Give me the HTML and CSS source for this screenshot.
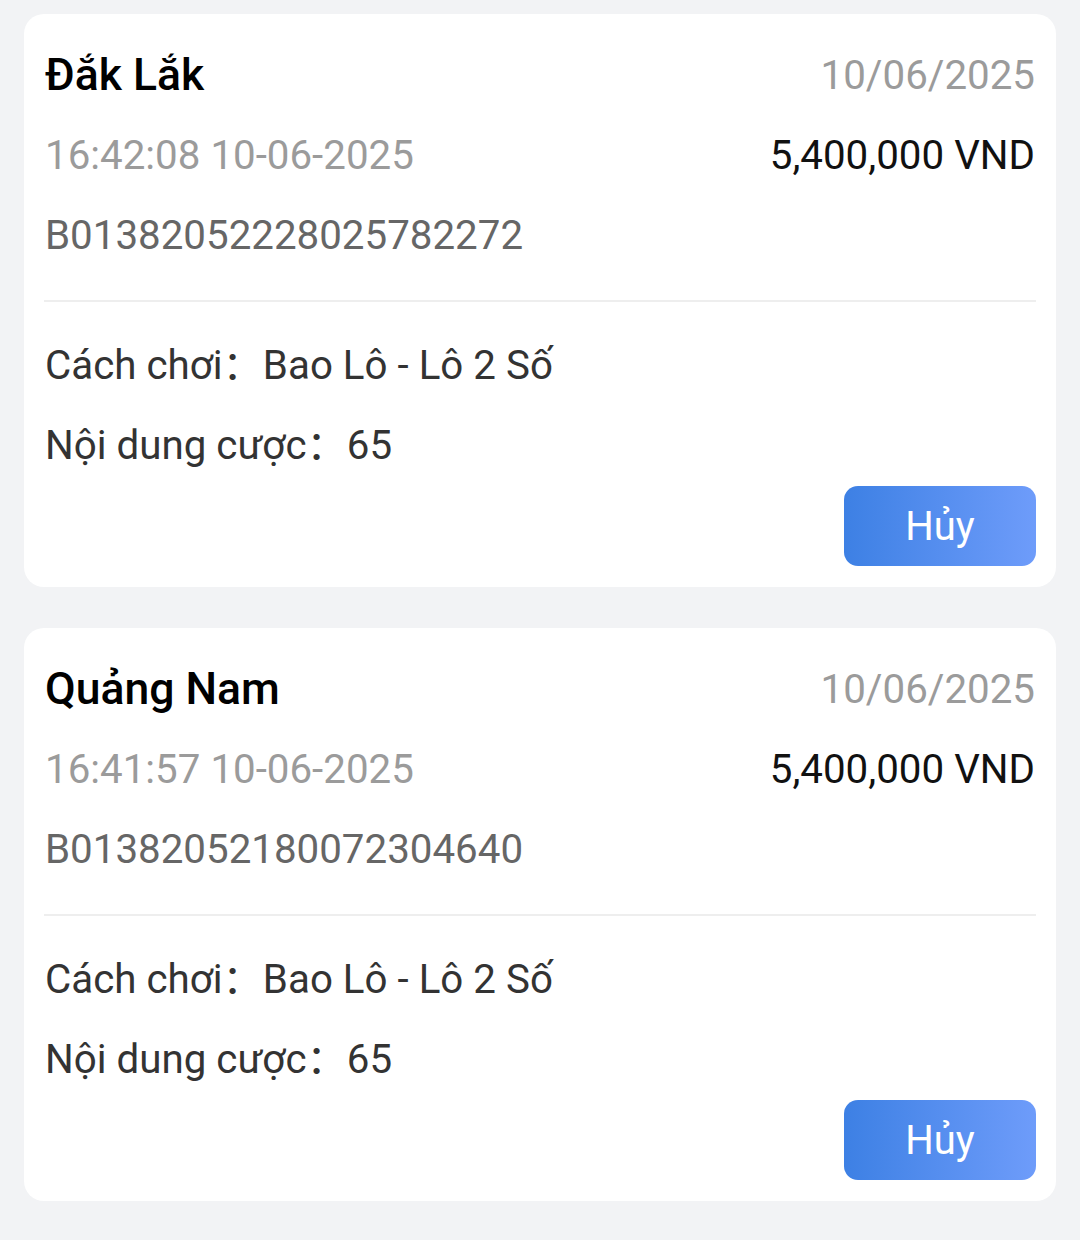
FILE: index.html
```html
<!DOCTYPE html>
<html lang="vi">
<head>
    <meta charset="UTF-8">
    <meta name="viewport" content="width=device-width, initial-scale=1.0">
    <title>Lịch sử cược</title>
    <link rel="stylesheet" href="styles.css">
</head>
<body>
    <div class="list">
        <!-- Ticket 1 -->
        <div class="ticket">
            <div class="ticket-head">
                <div class="row">
                    <span class="province">Đắk Lắk</span>
                    <span class="draw-date">10/06/2025</span>
                </div>
                <div class="row">
                    <span class="time">16:42:08 10-06-2025</span>
                    <span class="amount">5,400,000 VND</span>
                </div>
                <div class="row">
                    <span class="code">B01382052228025782272</span>
                </div>
            </div>
            <div class="divider"></div>
            <div class="ticket-body">
                <div class="row">
                    <span class="detail">Cách chơi：Bao Lô - Lô 2 Số</span>
                </div>
                <div class="row">
                    <span class="detail">Nội dung cược：65</span>
                </div>
                <div class="actions">
                    <button class="cancel-btn">Hủy</button>
                </div>
            </div>
        </div>

        <!-- Ticket 2 -->
        <div class="ticket">
            <div class="ticket-head">
                <div class="row">
                    <span class="province">Quảng Nam</span>
                    <span class="draw-date">10/06/2025</span>
                </div>
                <div class="row">
                    <span class="time">16:41:57 10-06-2025</span>
                    <span class="amount">5,400,000 VND</span>
                </div>
                <div class="row">
                    <span class="code">B01382052180072304640</span>
                </div>
            </div>
            <div class="divider"></div>
            <div class="ticket-body">
                <div class="row">
                    <span class="detail">Cách chơi：Bao Lô - Lô 2 Số</span>
                </div>
                <div class="row">
                    <span class="detail">Nội dung cược：65</span>
                </div>
                <div class="actions">
                    <button class="cancel-btn">Hủy</button>
                </div>
            </div>
        </div>
    </div>
</body>
</html>
```

FILE: styles.css
```css
* {
    padding: 0;
    margin: 0;
    box-sizing: border-box;
    font-family: Roboto, "Noto Sans CJK SC", sans-serif;
}
body {
    background-color: #f2f3f5;
    min-height: 1240px;
}

.list {
    display: flex;
    flex-direction: column;
    gap: 41px;
    padding: 14px 24px;
}

/* Ticket card */
.ticket {
    background-color: #fff;
    border-radius: 20px;
    padding: 21px 20px;
}
.row {
    display: flex;
    justify-content: space-between;
    align-items: center;
    height: 80px;
    font-size: 40.3px;
    padding: 0 1px;
}
.province {
    font-size: 44.5px;
    font-weight: 500;
    color: #000;
}
.draw-date,
.time {
    color: #9b9b9b;
}
.amount {
    color: #111;
}
.code {
    color: #666;
}
.divider {
    height: 2px;
    background-color: #eeeeee;
    margin: 25px 0 19px;
}

.ticket-body .row {
    justify-content: flex-start;
}
.detail {
    color: #333;
}

.actions {
    display: flex;
    justify-content: flex-end;
    margin-top: 5px;
}
.cancel-btn {
    width: 192px;
    height: 80px;
    border: none;
    border-radius: 14px;
    background: linear-gradient(90deg, #3d80e4, #6e9cfa);
    color: #fff;
    font-size: 40px;
    cursor: pointer;
}
```
